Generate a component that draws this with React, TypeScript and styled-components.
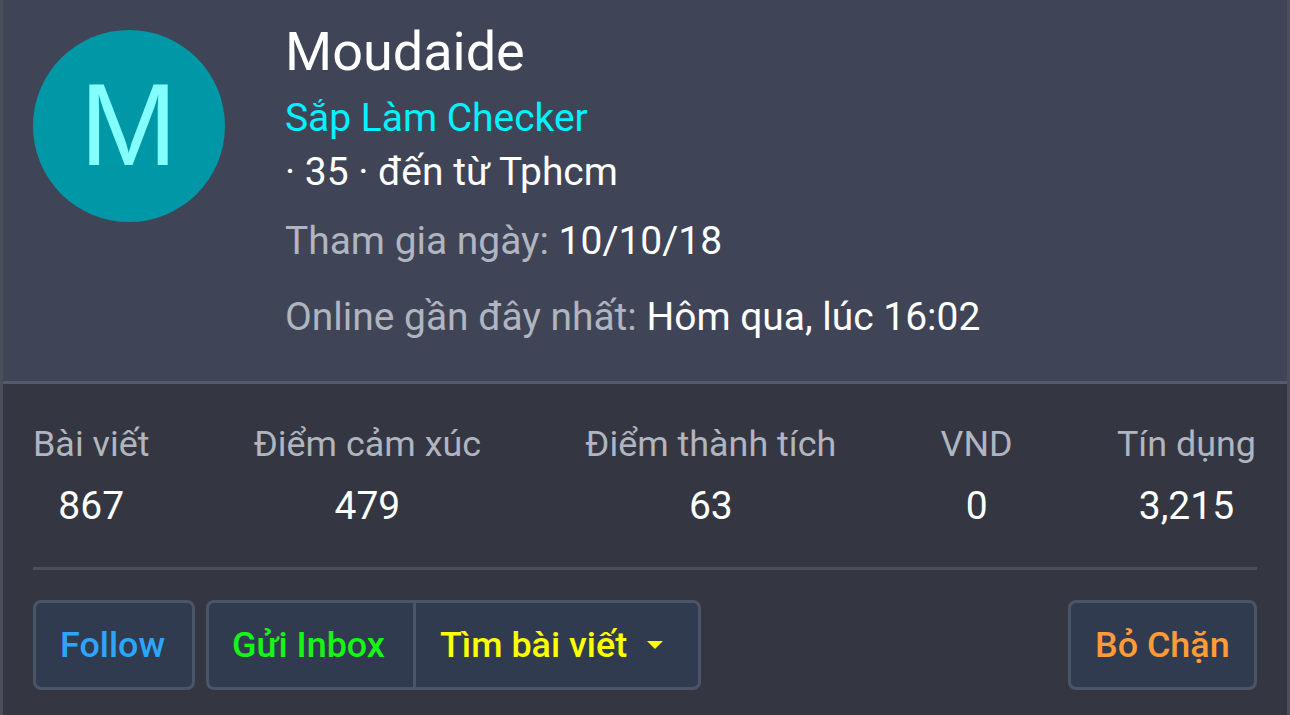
import styled, { createGlobalStyle } from 'styled-components'

const GlobalStyle = createGlobalStyle`
  * {
    box-sizing: border-box;
  }
  body {
    margin: 0;
    background: #343741;
    font-family: Roboto, "Noto Sans", sans-serif;
    color: #fff;
  }
`

const Card = styled.article`
  height: 715px;
  border: solid #4b4f5b;
  border-width: 0 3px;
  background: #343741;
  overflow: hidden;
`

const Header = styled.header`
  display: flex;
  gap: 60px;
  height: 384px;
  padding: 30px 30px 0;
  border-bottom: 3px solid #535b6c;
  background: #3f4556;
`

const Avatar = styled.div`
  flex: none;
  width: 192px;
  height: 192px;
  padding-right: 1px;
  border-radius: 50%;
  background: #0097a7;
  color: #84ffff;
  font-family: "Liberation Sans", Arial, sans-serif;
  font-size: 117px;
  line-height: 189px;
  text-align: center;
`

const Info = styled.div`
  display: flex;
  flex-direction: column;
  white-space: nowrap;
`

const Name = styled.h4`
  margin: -9px 0 0;
  font-size: 54px;
  font-weight: 400;
  line-height: 62px;
`

const Line = styled.div<{ $color?: string; $top?: number }>`
  margin-top: ${p => p.$top ?? 0}px;
  color: ${p => p.$color ?? '#fff'};
  font-size: 38.95px;
  line-height: 54px;
`

const Muted = styled.span`
  color: #b0b5c0;
`

const Body = styled.div`
  padding: 0 30px;
`

const Stats = styled.dl`
  display: flex;
  justify-content: space-between;
  height: 186px;
  margin: 0;
  padding: 33px 1px 0 0;
  border-bottom: 3px solid #4b4f5b;
  text-align: center;
  white-space: nowrap;
`

const Label = styled.dt`
  color: #b0b5c0;
  font-size: 35.9px;
  line-height: 54px;
`

const Value = styled.dd`
  margin: 8px 0 0;
  font-size: 39px;
  line-height: 54px;
`

const Actions = styled.div`
  display: flex;
  gap: 11px;
  padding-top: 30px;
`

const Group = styled.div`
  display: flex;
`

const Button = styled.button<{ $color: string; $width: number; $side?: 'left' | 'right' }>`
  display: flex;
  align-items: center;
  gap: 20px;
  width: ${p => p.$width}px;
  height: 90px;
  padding: 0 0 0 ${p => (p.$side ? 23 : 24)}px;
  border: 3px solid #4b556a;
  border-right-width: ${p => (p.$side === 'left' ? 0 : 3)}px;
  border-radius: ${p => (p.$side === 'left' ? '8px 0 0 8px' : p.$side === 'right' ? '0 8px 8px 0' : '8px')};
  background: #313b50;
  color: ${p => p.$color};
  font-family: inherit;
  font-size: 35.9px;
  font-weight: 500;
  line-height: 42px;
  white-space: nowrap;
`

const MenuButton = styled(Button)`
  padding-left: 24px;
`

const Caret = styled.span`
  margin-bottom: 1px;
  border: 8px solid transparent;
  border-top-color: currentColor;
  border-bottom: 0;
`

const Push = styled.div`
  margin-left: auto;
`

const stats = [
  { label: 'Bài viết', value: '867' },
  { label: 'Điểm cảm xúc', value: '479' },
  { label: 'Điểm thành tích', value: '63' },
  { label: 'VND', value: '0' },
  { label: 'Tín dụng', value: '3,215' },
]

export default function App() {
  return (
    <>
      <GlobalStyle />
      <Card>
        <Header>
          <Avatar>M</Avatar>
          <Info>
            <Name>Moudaide</Name>
            <Line $color="#00f3ff" $top={8}>Sắp Làm Checker</Line>
            <Line>· 35 · đến từ Tphcm</Line>
            <Line $top={15}><Muted>Tham gia ngày:</Muted> 10/10/18</Line>
            <Line $top={22}><Muted>Online gần đây nhất:</Muted> Hôm qua, lúc 16:02</Line>
          </Info>
        </Header>
        <Body>
          <Stats>
            {stats.map(s => (
              <div key={s.label}>
                <Label>{s.label}</Label>
                <Value>{s.value}</Value>
              </div>
            ))}
          </Stats>
          <Actions>
            <Button $color="#2ba6ff" $width={162}>Follow</Button>
            <Group>
              <Button $color="#16f516" $width={207} $side="left">Gửi Inbox</Button>
              <MenuButton $color="#ffff00" $width={288} $side="right">
                Tìm bài viết
                <Caret />
              </MenuButton>
            </Group>
            <Push>
              <Button $color="#ff9c38" $width={189}>Bỏ Chặn</Button>
            </Push>
          </Actions>
        </Body>
      </Card>
    </>
  )
}
